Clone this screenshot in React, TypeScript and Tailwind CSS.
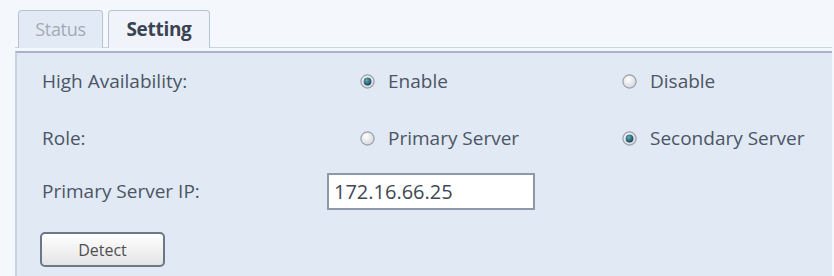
import React from "react";

function Radio({ checked }: { checked: boolean }) {
  return (
    <svg width="15" height="15" viewBox="0 0 15 15" className="shrink-0">
      <defs>
        <radialGradient id={checked ? "rc" : "ru"} cx="0.4" cy="0.35" r="0.7">
          <stop offset="0" stopColor="#ffffff" />
          <stop offset="1" stopColor="#d0d4da" />
        </radialGradient>
        <radialGradient id="dot" cx="0.4" cy="0.35" r="0.7">
          <stop offset="0" stopColor="#62aabd" />
          <stop offset="1" stopColor="#123f55" />
        </radialGradient>
      </defs>
      <circle cx="7.5" cy="7.5" r="6.6" fill={`url(#${checked ? "rc" : "ru"})`} stroke="#9aa0a8" strokeWidth="1.2" />
      {checked && <circle cx="7.5" cy="7.5" r="3.9" fill="url(#dot)" />}
    </svg>
  );
}

function Option({ checked, label }: { checked: boolean; label: string }) {
  return (
    <div className="flex items-center gap-[13px]">
      <Radio checked={checked} />
      <span>{label}</span>
    </div>
  );
}

export default function App() {
  return (
    <div
      className="w-[834px] h-[276px] overflow-hidden bg-[#f4f7fb] text-[#4b5564]"
      style={{ fontFamily: '"Open Sans", "Liberation Sans", sans-serif' }}
    >
      <div className="pt-[10px] flex gap-[5px] h-[48px] mr-[2px] ml-[15px] border-b border-[#c9d3e1] pl-[3px]">
        <div className="w-[85px] h-[38px] border border-b-0 border-[#b6c4d6] rounded-t-[4px] bg-[#e2eaf5] flex items-center justify-center text-[18px] text-[#a2aab6] tracking-[-0.3px]">
          Status
        </div>
        <div className="w-[102px] h-[38px] border border-b-0 border-[#b6c4d6] rounded-t-[4px] bg-[#f0f4fa] flex items-center justify-center text-[19px] font-bold text-[#3a4352] tracking-[-0.3px]">
          Setting
        </div>
      </div>
      <div className="ml-[15px] mr-[2px] mt-[3px] h-[230px] border-t-2 border-l-2 border-t-[#a7b4c7] border-l-[#c8d2e0] bg-[#e1e9f5] pt-[10px] text-[19px]">
        <div className="grid grid-cols-[318px_262px_1fr] pl-[25px] h-[36px] items-center">
          <span>High Availability:</span>
          <Option checked={true} label="Enable" />
          <Option checked={false} label="Disable" />
        </div>
        <div className="grid grid-cols-[318px_262px_1fr] pl-[25px] h-[36px] items-center mt-[21px]">
          <span>Role:</span>
          <Option checked={false} label="Primary Server" />
          <Option checked={true} label="Secondary Server" />
        </div>
        <div className="flex pl-[25px] h-[37px] items-center mt-[17px]">
          <span className="w-[285px]">Primary Server IP:</span>
          <div className="w-[208px] h-[37px] border-2 border-[#8d98a8] bg-white flex items-center pl-[5px] text-[20px] text-[#404854]">
            172.16.66.25
          </div>
        </div>
        <div className="pl-[23px] mt-[22px]">
          <button className="w-[125px] h-[35px] rounded-[5px] border-2 border-[#6d7786] bg-gradient-to-b from-[#ffffff] to-[#e4e4e6] text-[16px] text-[#505050] flex items-center justify-center">
            Detect
          </button>
        </div>
      </div>
    </div>
  );
}
